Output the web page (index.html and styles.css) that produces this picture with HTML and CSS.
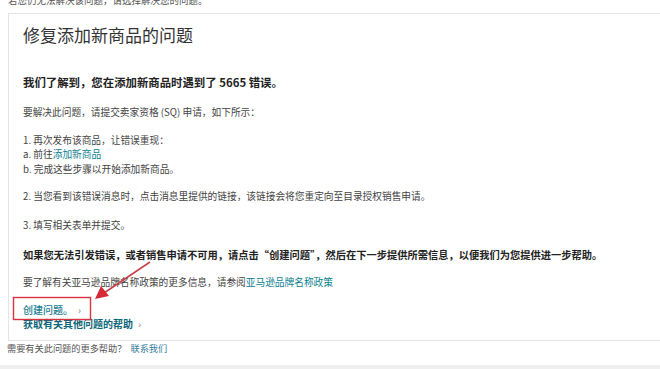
FILE: index.html
```html
<!DOCTYPE html>
<html lang="zh-CN">
<head>
<meta charset="utf-8">
<title>修复添加新商品的问题</title>
<link rel="stylesheet" href="styles.css">
</head>
<body>
<div class="page">
  <div class="top">若您仍无法解决该问题，请选择解决您的问题。</div>
  <div class="card">
    <h1 class="title">修复添加新商品的问题</h1>
    <p class="lead">我们了解到，您在添加新商品时遇到了 5665 错误。</p>
    <p class="p p-sq">要解决此问题，请提交卖家资格 (SQ) 申请，如下所示：</p>
    <div class="steps">
      <div>1. 再次发布该商品，让错误重现：</div>
      <div>a. 前往<a class="link" href="#">添加新商品</a></div>
      <div>b. 完成这些步骤以开始添加新商品。</div>
    </div>
    <p class="p p-2">2. 当您看到该错误消息时，点击消息里提供的链接，该链接会将您重定向至目录授权销售申请。</p>
    <p class="p p-3">3. 填写相关表单并提交。</p>
    <p class="lead lead-2">如果您无法引发错误，或者销售申请不可用，请点击“创建问题”，然后在下一步提供所需信息，以便我们为您提供进一步帮助。</p>
    <p class="p p-more">要了解有关亚马逊品牌名称政策的更多信息，请参阅<a class="link" href="#">亚马逊品牌名称政策</a></p>
    <div class="actions">
      <div><a class="act act-create" href="#">创建问题。</a><span class="chev">›</span></div>
      <div><a class="act act-help" href="#">获取有关其他问题的帮助</a><span class="chev">›</span></div>
    </div>
  </div>
  <div class="foot">需要有关此问题的更多帮助？ <a class="link" href="#">联系我们</a></div>
  <div class="band"></div>
</div>
<svg class="annot" width="660" height="369" viewBox="0 0 660 369" xmlns="http://www.w3.org/2000/svg">
  <rect x="13.5" y="297.5" width="77" height="22" fill="none" stroke="#d8333f" stroke-width="1.4"/>
  <line x1="150" y1="262" x2="104" y2="293" stroke="#c9404a" stroke-width="1.6"/>
  <polygon points="95,299 101,286 109,296" fill="#d62a36"/>
</svg>
</body>
</html>
```

FILE: styles.css
```css
html, body {
  margin: 0;
  padding: 0;
  background: #ffffff;
}
body {
  font-family: "Noto Sans CJK SC", "Noto Sans", "Liberation Sans", sans-serif;
  color: #444;
  overflow: hidden;
  width: 660px;
  height: 369px;
}
.page {
  position: relative;
}
.top {
  margin-top: -5px;
  padding-left: 8px;
  font-size: 9.5px;
  line-height: 11px;
  color: #555;
  white-space: nowrap;
}
.card {
  margin-top: 7px;
  margin-left: 8px;
  border: 1px solid #e4e4e4;
  border-right: none;
  padding: 9px 0 9px 14px;
}
.title {
  margin: 0;
  font-size: 17px;
  line-height: 24px;
  font-weight: normal;
  color: #333;
}
.lead {
  margin: 27px 0 0;
  font-size: 11.4px;
  line-height: 16px;
  font-weight: bold;
  color: #222;
  white-space: nowrap;
}
.p {
  margin: 0;
  font-size: 9.7px;
  line-height: 15px;
  color: #444;
  white-space: nowrap;
}
.p-sq { margin-top: 14.5px; }
.steps {
  margin-top: 13px;
  font-size: 9.7px;
  line-height: 14.5px;
  color: #444;
}
.p-2 { margin-top: 12.5px; }
.p-3 { margin-top: 14px; }
.lead-2 {
  margin-top: 14.5px;
  font-size: 10.25px;
  color: #222;
}
.p-more { margin-top: 11.5px; }
.link {
  color: #0d7f93;
  text-decoration: none;
}
.actions {
  margin-top: 13.5px;
  font-size: 10px;
  line-height: 14px;
}
.act {
  text-decoration: none;
  color: #0f6e80;
}
.act-create {
  font-weight: 500;
  color: #1b7d92;
}
.act-help {
  font-weight: bold;
  color: #0b6677;
}
.chev {
  margin-left: 5px;
  color: #888;
  font-size: 10px;
}
.foot {
  padding-left: 7px;
  font-size: 9.2px;
  line-height: 14px;
  color: #555;
}
.foot .link {
  margin-left: 2px;
  color: #3b7fa0;
}
.band {
  margin-top: 10px;
  height: 10px;
  background: #efefef;
}
.annot {
  position: absolute;
  left: 0;
  top: 0;
  pointer-events: none;
}
```
